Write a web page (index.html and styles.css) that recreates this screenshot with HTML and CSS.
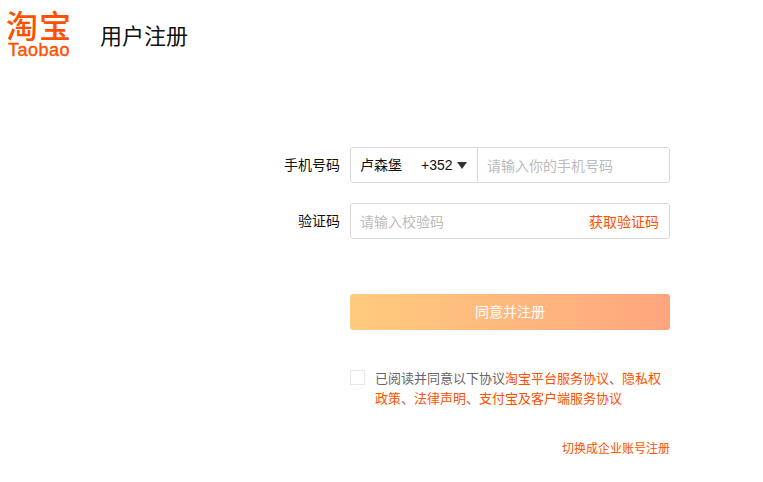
FILE: index.html
```html
<!DOCTYPE html>
<html lang="zh-CN">
<head>
    <meta charset="UTF-8">
    <title>用户注册</title>
    <link rel="stylesheet" href="styles.css">
</head>
<body>
    <header class="header">
        <div class="logo">
            <div class="logo-cn">淘宝</div>
            <div class="logo-en">Taobao</div>
        </div>
        <h1 class="title">用户注册</h1>
    </header>

    <main class="form">
        <div class="row">
            <label class="label">手机号码</label>
            <div class="field">
                <div class="country">
                    <span class="country-name">卢森堡</span>
                    <span class="country-code">+352</span>
                    <span class="arrow"></span>
                </div>
                <span class="placeholder">请输入你的手机号码</span>
            </div>
        </div>
        <div class="row">
            <label class="label">验证码</label>
            <div class="field field-code">
                <span class="placeholder">请输入校验码</span>
                <a class="get-code">获取验证码</a>
            </div>
        </div>
        <button class="submit">同意并注册</button>
        <div class="agree">
            <span class="checkbox"></span>
            <p class="agree-text">已阅读并同意以下协议<a>淘宝平台服务协议</a>、<a>隐私权</a><br><a>政策</a>、<a>法律声明</a>、<a>支付宝及客户端服务协议</a></p>
        </div>
        <div class="switch"><a>切换成企业账号注册</a></div>
    </main>
</body>
</html>
```

FILE: styles.css
```css
* {
    box-sizing: border-box;
}
body {
    margin: 0;
    background-color: #fff;
    color: #111;
    font-family: "Liberation Sans", "Noto Sans CJK SC", sans-serif;
}
a {
    color: #ff5000;
}
.header {
    display: flex;
    align-items: flex-start;
    padding: 12px 0 0 5px;
}
.logo {
    width: 68px;
    color: #ff5000;
    text-align: center;
}
.logo-cn {
    font-size: 32px;
    font-weight: 500;
    line-height: 30px;
    letter-spacing: 1px;
    white-space: nowrap;
}
.logo-en {
    font-size: 18px;
    line-height: 17px;
    letter-spacing: 0.5px;
    -webkit-text-stroke: 0.4px #ff5000;
}
.title {
    margin: 7px 0 0 27px;
    font-size: 22px;
    font-weight: normal;
    line-height: 36px;
}
.form {
    width: 320px;
    margin: 88px 0 0 350px;
}
.row {
    position: relative;
    margin-bottom: 20px;
}
.label {
    position: absolute;
    right: 330px;
    top: 0;
    font-size: 14px;
    line-height: 36px;
    white-space: nowrap;
}
.field {
    display: flex;
    align-items: center;
    height: 36px;
    border: 1px solid #d9d9d9;
    border-radius: 3px;
    font-size: 14px;
}
.field-code {
    justify-content: space-between;
    padding: 0 10px 0 9px;
}
.country {
    display: flex;
    align-items: center;
    width: 127px;
    height: 100%;
    padding-left: 9px;
    margin-right: 9px;
    border-right: 1px solid #d9d9d9;
}
.country-name {
    margin-top: -2px;
}
.country-code {
    margin-left: 19px;
}
.arrow {
    width: 0;
    height: 0;
    margin-left: 4px;
    border-left: 5px solid transparent;
    border-right: 5px solid transparent;
    border-top: 7px solid #333;
}
.placeholder {
    color: #bbb;
}
.submit {
    display: block;
    width: 100%;
    height: 36px;
    margin-top: 55px;
    padding: 0 0 2px;
    border: none;
    border-radius: 3px;
    background: linear-gradient(to right, #ffcb7e, #ffa57e);
    color: #fff;
    font-family: inherit;
    font-size: 14px;
}
.agree {
    display: flex;
    margin-top: 40px;
}
.checkbox {
    flex: none;
    width: 15px;
    height: 15px;
    margin-right: 10px;
    border: 1px solid #e8e8e8;
}
.agree-text {
    margin: -1px 0 0;
    color: #666;
    font-size: 13px;
    line-height: 20px;
}
.switch {
    margin-top: 30px;
    font-size: 12px;
    line-height: 20px;
    text-align: right;
}
```
